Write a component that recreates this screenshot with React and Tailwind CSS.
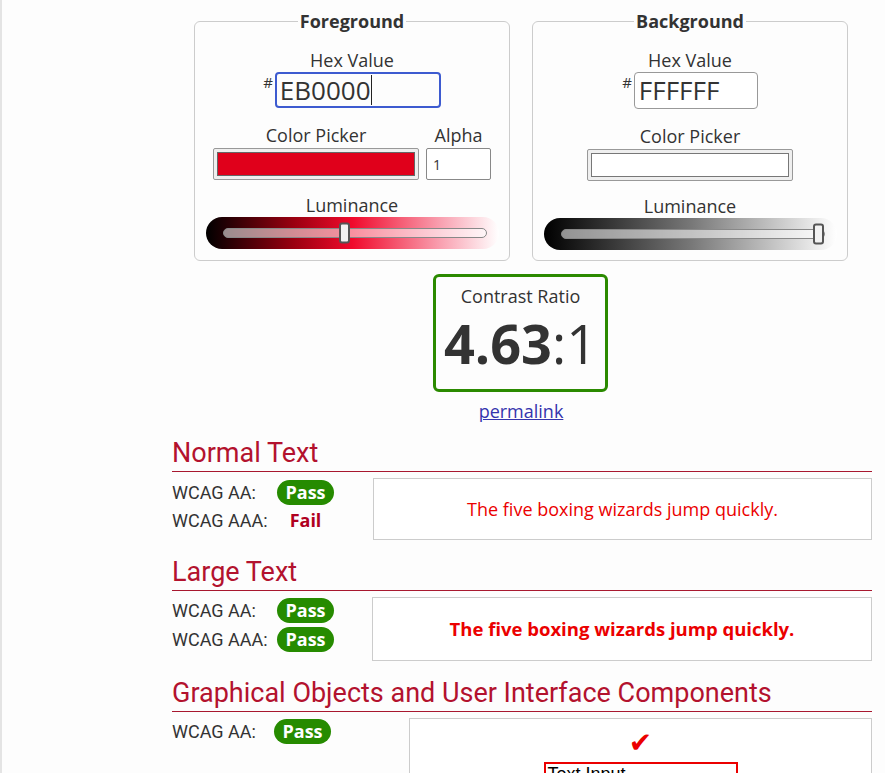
import React from 'react'

function Swatch({ color, inner }) {
  return (
    <div className="w-[206px] h-[32px] border border-[#999] bg-[#efefef] rounded-[2px] p-[3px]">
      <div className={`w-full h-full border ${inner}`} style={{ backgroundColor: color }} />
    </div>
  )
}

function Slider({ gradient, thumb }) {
  return (
    <div className="w-[293px] h-[32px] mx-auto rounded-full flex items-center pl-[17px] pr-[12px]" style={{ background: gradient }}>
      <div className="relative flex-1 h-[10px] rounded-full border border-[#888] bg-white/55">
        <div
          className="absolute top-1/2 -translate-y-1/2 w-[11px] h-[21px] rounded-[3px] border-2 border-[#555] bg-[#f2f2f2]"
          style={{ left: thumb }}
        />
      </div>
    </div>
  )
}

function Badge() {
  return (
    <span className="w-[57px] h-[25px] rounded-full bg-[#268b00] text-white font-bold text-[18px] flex items-center justify-center">
      Pass
    </span>
  )
}

function Label({ children }) {
  return <span className="font-['Roboto',sans-serif] text-[18px] text-[#333]">{children}</span>
}

function Heading({ children }) {
  return (
    <h2 className="font-['Roboto',sans-serif] text-[27px] leading-[30px] text-[#b3122e] border-b border-[#a8182f] pb-[3px]">
      {children}
    </h2>
  )
}

export default function App() {
  return (
    <div className="h-[773px] w-[885px] overflow-hidden bg-[#fdfdfd] flex items-start font-['Open_Sans',sans-serif] text-[#333]">
      <div className="w-[2px] h-full bg-[#e4e4e4]" />
      <div className="ml-[170px] w-[700px]">
        {/* Colour fieldsets */}
        <div className="pt-[9px] pl-[22px] flex gap-[22px]">
          <fieldset className="w-[316px] border border-[#ccc] rounded-[6px] pb-[10px]">
            <legend className="mx-auto px-[2px] font-bold text-[18px] leading-[24px]">Foreground</legend>
            <div className="mt-[15px] text-center text-[18px] leading-[24px]">Hex Value</div>
            <div className="flex justify-center">
              <span className="text-[15px] leading-none mt-[3px] mr-[2px]">#</span>
              <div className="w-[166px] h-[36px] border-2 border-[#3d5bd0] rounded-[4px] flex items-center pl-[3px] text-[26px]">
                EB0000<span className="w-px h-[30px] bg-[#222]" />
              </div>
            </div>
            <div className="mt-[15px] flex justify-center gap-[7px]">
              <div className="flex flex-col items-center">
                <span className="text-[18px] leading-[24px]">Color Picker</span>
                <div className="mt-[1px]"><Swatch color="#e0001b" inner="border-[#666]" /></div>
              </div>
              <div className="flex flex-col items-center">
                <span className="text-[18px] leading-[24px]">Alpha</span>
                <div className="mt-[1px] w-[65px] h-[32px] border border-[#888] rounded-[2px] bg-white flex items-center pl-[6px] text-[14px]">1</div>
              </div>
            </div>
            <div className="mt-[13px] text-center text-[18px] leading-[24px]">Luminance</div>
            <Slider gradient="linear-gradient(to right, #000 0%, #9a0010 30%, #f00a2c 50%, #f9a0b0 80%, #fff 100%)" thumb="44%" />
          </fieldset>

          <fieldset className="w-[316px] border border-[#ccc] rounded-[6px] pb-[10px]">
            <legend className="mx-auto px-[2px] font-bold text-[18px] leading-[24px]">Background</legend>
            <div className="mt-[15px] text-center text-[18px] leading-[24px]">Hex Value</div>
            <div className="flex justify-center">
              <span className="text-[15px] leading-none mt-[3px] mr-[2px]">#</span>
              <div className="w-[124px] h-[37px] border border-[#999] rounded-[4px] bg-white flex items-center pl-[4px] text-[26px]">
                FFFFFF
              </div>
            </div>
            <div className="mt-[15px] flex flex-col items-center">
              <span className="text-[18px] leading-[24px]">Color Picker</span>
              <div className="mt-[1px]"><Swatch color="#ffffff" inner="border-[#777]" /></div>
            </div>
            <div className="mt-[13px] text-center text-[18px] leading-[24px]">Luminance</div>
            <Slider gradient="linear-gradient(to right, #000 0%, #777 50%, #fff 100%)" thumb="calc(100% - 11px)" />
          </fieldset>
        </div>

        {/* Contrast ratio */}
        <div className="mt-[13px] ml-[261px] w-[175px] h-[118px] border-[3px] border-[#2b8a00] rounded-[6px] flex flex-col items-center pt-[7px]">
          <span className="text-[18px] leading-[24px]">Contrast Ratio</span>
          <span className="mt-[5px] text-[54px] leading-[60px]">
            <b>4.63</b>:1
          </span>
        </div>
        <div className="mt-[7px] text-center pr-[2px] text-[18px] leading-[24px]">
          <a href="#" className="text-[#3434ad] underline">permalink</a>
        </div>

        {/* Normal text */}
        <div className="mt-[15px]">
          <Heading>Normal Text</Heading>
          <div className="mt-[6px] flex items-start">
            <div className="mt-[2px] flex flex-col gap-[3px]">
              <div className="h-[25px] flex items-center">
                <span className="w-[105px]"><Label>WCAG AA:</Label></span>
                <Badge />
              </div>
              <div className="h-[25px] flex items-center">
                <span className="w-[105px]"><Label>WCAG AAA:</Label></span>
                <span className="w-[57px] text-center font-bold text-[18px] text-[#b0001f]">Fail</span>
              </div>
            </div>
            <div className="ml-[39px] flex-1 h-[62px] border border-[#ccc] bg-white flex items-center justify-center text-[18px] text-[#eb0000]">
              The five boxing wizards jump quickly.
            </div>
          </div>
        </div>

        {/* Large text */}
        <div className="mt-[17px]">
          <Heading>Large Text</Heading>
          <div className="mt-[6px] flex items-start">
            <div className="mt-[1px] flex flex-col gap-[4px]">
              <div className="h-[25px] flex items-center">
                <span className="w-[105px]"><Label>WCAG AA:</Label></span>
                <Badge />
              </div>
              <div className="h-[25px] flex items-center">
                <span className="w-[105px]"><Label>WCAG AAA:</Label></span>
                <Badge />
              </div>
            </div>
            <div className="ml-[38px] flex-1 h-[64px] border border-[#ccc] bg-white flex items-center justify-center font-bold text-[18.5px] text-[#eb0000]">
              The five boxing wizards jump quickly.
            </div>
          </div>
        </div>

        {/* Graphical objects */}
        <div className="mt-[17px]">
          <Heading>Graphical Objects and User Interface Components</Heading>
          <div className="mt-[6px] flex items-start">
            <div className="mt-[1px] h-[25px] flex items-center">
              <span className="w-[102px]"><Label>WCAG AA:</Label></span>
              <Badge />
            </div>
            <div className="ml-[78px] flex-1 h-[130px] border border-[#ccc] bg-white flex flex-col items-center pt-[8px]">
              <span className="font-['DejaVu_Sans',sans-serif] text-[28px] leading-[32px] text-[#eb0000]">✔</span>
              <div className="mt-[3px] w-[194px] h-[50px] border-2 border-[#eb0000] px-[2px] font-['Liberation_Sans',sans-serif] text-[18px] leading-[20px] text-black">
                Text Input
              </div>
            </div>
          </div>
        </div>
      </div>
    </div>
  )
}
